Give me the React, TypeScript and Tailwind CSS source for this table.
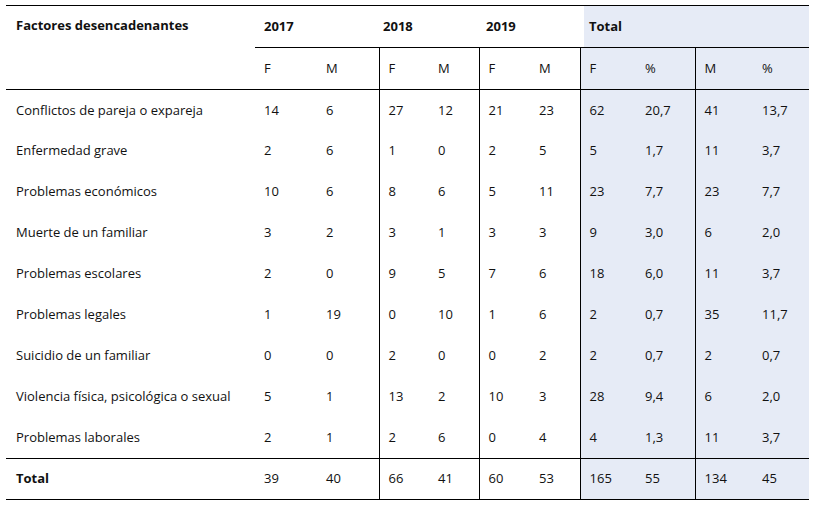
const rows: [string, string[]][] = [
  ["Conflictos de pareja o expareja", ["14", "6", "27", "12", "21", "23", "62", "20,7", "41", "13,7"]],
  ["Enfermedad grave", ["2", "6", "1", "0", "2", "5", "5", "1,7", "11", "3,7"]],
  ["Problemas económicos", ["10", "6", "8", "6", "5", "11", "23", "7,7", "23", "7,7"]],
  ["Muerte de un familiar", ["3", "2", "3", "1", "3", "3", "9", "3,0", "6", "2,0"]],
  ["Problemas escolares", ["2", "0", "9", "5", "7", "6", "18", "6,0", "11", "3,7"]],
  ["Problemas legales", ["1", "19", "0", "10", "1", "6", "2", "0,7", "35", "11,7"]],
  ["Suicidio de un familiar", ["0", "0", "2", "0", "0", "2", "2", "0,7", "2", "0,7"]],
  ["Violencia física, psicológica o sexual", ["5", "1", "13", "2", "10", "3", "28", "9,4", "6", "2,0"]],
  ["Problemas laborales", ["2", "1", "2", "6", "0", "4", "4", "1,3", "11", "3,7"]],
];
const totals = ["39", "40", "66", "41", "60", "53", "165", "55", "134", "45"];
const widths = [249, 62, 62, 50, 50, 51, 50, 56, 59, 58, 56];

// columns that open a group get a left rule; columns 7-10 are the shaded "Total" block
function cellClass(i: number) {
  return [
    "h-[41px] pl-[9px] text-left align-middle",
    i === 2 || i === 4 || i === 6 || i === 8 ? "border-l border-black" : "",
    i >= 6 ? "bg-[#e6ebf6]" : "",
  ].join(" ");
}

export default function App() {
  return (
    <div className="h-[507px] w-[814px] bg-white pl-[6px] pt-[5px] text-[13px] text-[#111]" style={{ fontFamily: '"Open Sans", "Noto Sans", sans-serif' }}>
      <table className="table-fixed border-collapse" style={{ width: 803 }}>
        <colgroup>
          {widths.map((w, i) => <col key={i} style={{ width: w }} />)}
        </colgroup>
        <thead>
          <tr className="border-t border-black">
            <th rowSpan={2} className="h-[41px] border-b border-black pl-[10px] pt-[10px] text-left align-top font-bold">Factores desencadenantes</th>
            <th colSpan={2} className="h-[41px] border-b border-black pl-[9px] text-left font-bold">2017</th>
            <th colSpan={2} className="border-b border-black pl-[4px] text-left font-bold">2018</th>
            <th colSpan={2} className="border-b border-black pl-[7px] text-left font-bold">2019</th>
            <th colSpan={4} className="border-b border-black p-0 text-left font-bold">
              <div className="ml-[4px] flex h-[41px] items-center bg-[#e6ebf6] pl-[5px]">Total</div>
            </th>
          </tr>
          <tr className="border-b border-black">
            {["F", "M", "F", "M", "F", "M", "F", "%", "M", "%"].map((h, i) => (
              <th key={i} className={`${cellClass(i)} h-[42px] font-normal`}>{h}</th>
            ))}
          </tr>
        </thead>
        <tbody>
          {rows.map(([label, vals]) => (
            <tr key={label}>
              <td className="h-[41px] pl-[10px]">{label}</td>
              {vals.map((v, i) => <td key={i} className={cellClass(i)}>{v}</td>)}
            </tr>
          ))}
          <tr className="border-y border-black">
            <td className="h-[41px] pl-[10px] font-bold">Total</td>
            {totals.map((v, i) => <td key={i} className={cellClass(i)}>{v}</td>)}
          </tr>
        </tbody>
      </table>
    </div>
  );
}
